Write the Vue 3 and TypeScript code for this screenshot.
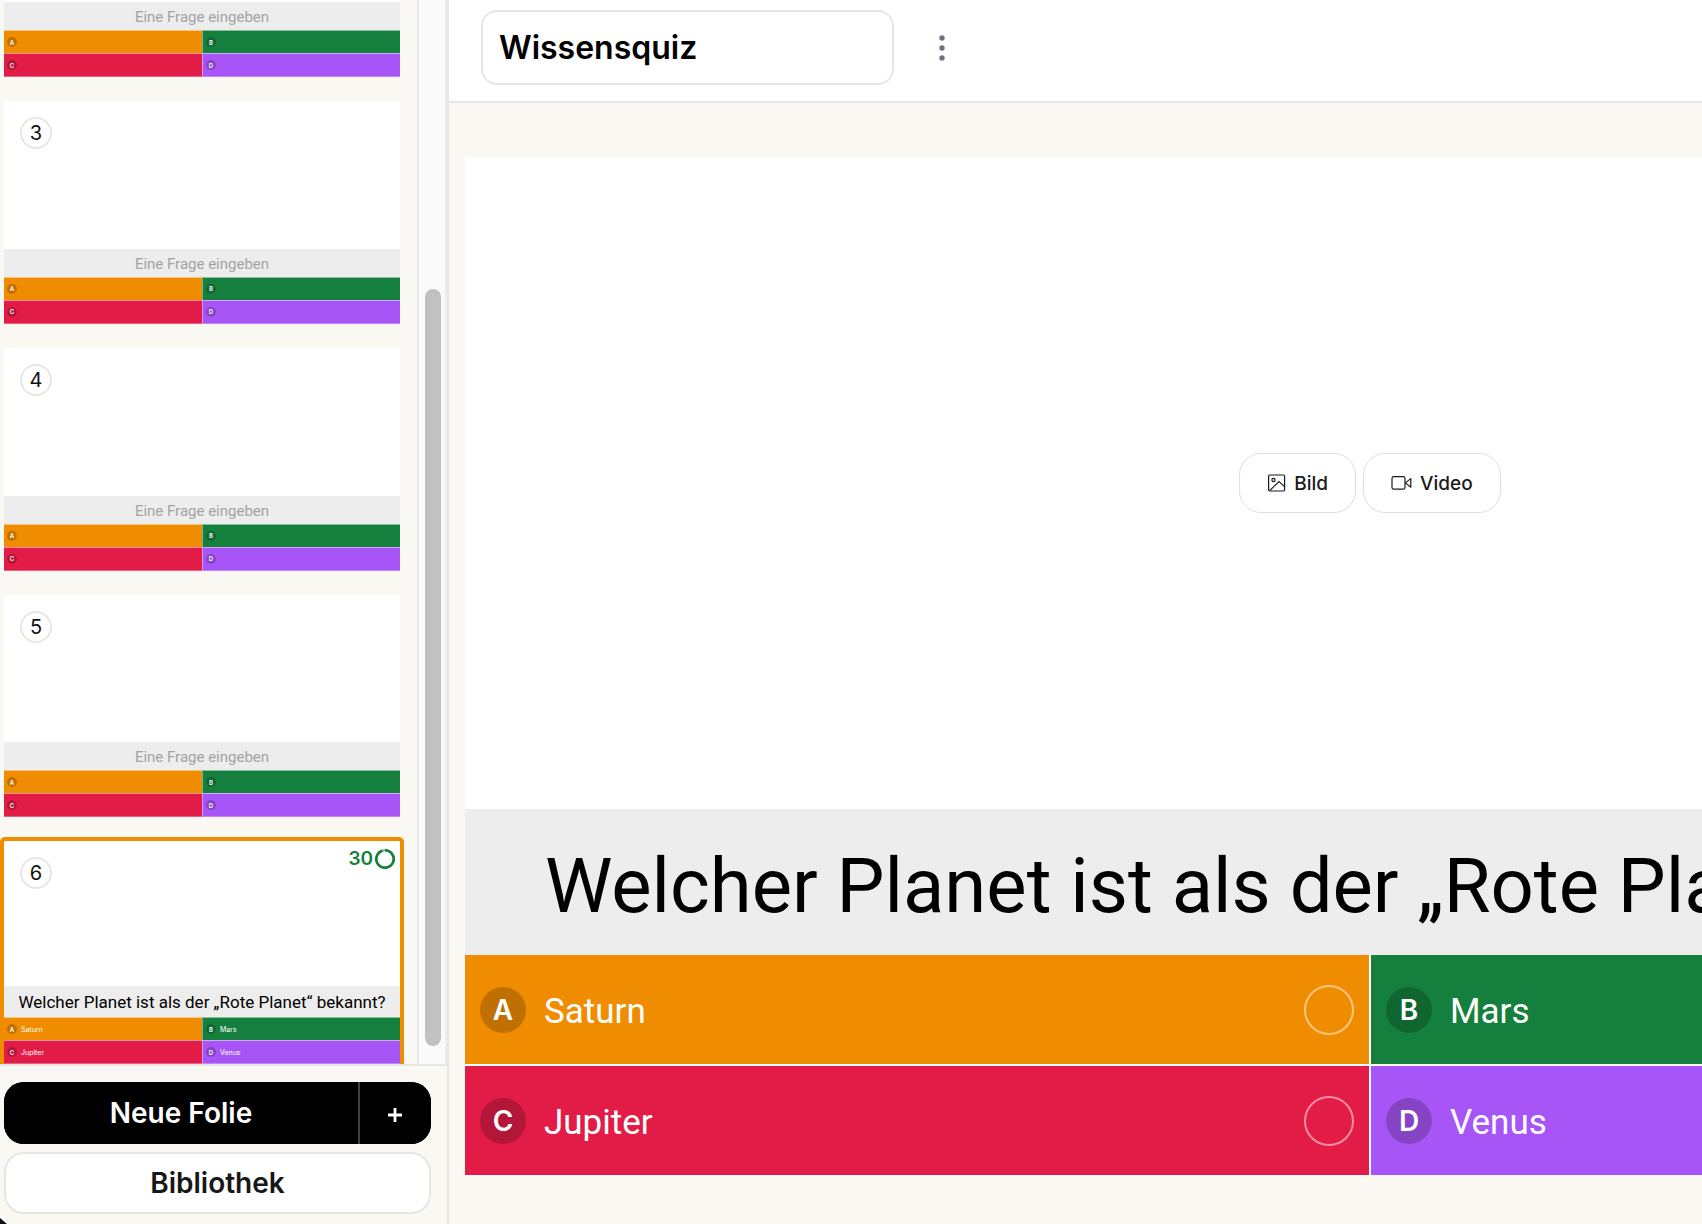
<script setup lang="ts">
import { ref } from 'vue'

interface Answer {
  letter: string
  text: string
  tone: string
}

interface Slide {
  id: number
  label?: string
  question: string
  seconds?: number
  answers: Answer[]
}

const letters = ['A', 'B', 'C', 'D']
const tones = ['orange', 'green', 'red', 'purple']

function makeAnswers(texts: string[] = []): Answer[] {
  return letters.map((letter, i) => ({ letter, text: texts[i] ?? '', tone: tones[i] }))
}

const title = ref('Wissensquiz')
const slides = ref<Slide[]>([
  { id: 2, question: '', answers: makeAnswers() },
  { id: 3, label: '3', question: '', answers: makeAnswers() },
  { id: 4, label: '4', question: '', answers: makeAnswers() },
  { id: 5, label: '5', question: '', answers: makeAnswers() },
  {
    id: 6,
    label: '6',
    question: 'Welcher Planet ist als der „Rote Planet“ bekannt?',
    seconds: 30,
    answers: makeAnswers(['Saturn', 'Mars', 'Jupiter', 'Venus']),
  },
])
const current = ref<Slide>(slides.value[4])
</script>

<template>
  <div class="app">
    <aside class="sidebar">
      <div class="browser">
        <ol class="slides">
          <li v-for="slide in slides" :key="slide.id">
            <button
              type="button"
              class="thumb"
              :class="{ selected: slide.id === current.id }"
              @click="current = slide"
            >
              <span class="thumb-media">
                <span v-if="slide.label" class="number">{{ slide.label }}</span>
                <span v-if="slide.seconds" class="timer">
                  {{ slide.seconds }}
                  <svg width="20" height="20" viewBox="0 0 20 20" aria-hidden="true">
                    <circle cx="10" cy="10" r="8.7" fill="none" stroke="#8fc3a3" stroke-width="2.4" />
                    <path d="M10 1.3A8.7 8.7 0 1 1 7.4 1.7" fill="none" stroke="#15803d" stroke-width="2.6" />
                  </svg>
                </span>
              </span>
              <span class="thumb-question" :class="{ empty: !slide.question }">{{
                slide.question || 'Eine Frage eingeben'
              }}</span>
              <span class="thumb-answers">
                <span v-for="a in slide.answers" :key="a.letter" class="thumb-answer" :class="a.tone">
                  <span class="thumb-letter">{{ a.letter }}</span>
                  <span>{{ a.text }}</span>
                </span>
              </span>
            </button>
          </li>
        </ol>
        <div class="track"><div class="handle"></div></div>
      </div>

      <div class="actions">
        <div class="split">
          <button type="button" class="new-slide">Neue Folie</button>
          <button type="button" class="more-slides" aria-label="Folientyp wählen">
            <svg width="14" height="14" viewBox="0 0 14 14" aria-hidden="true">
              <path d="M7 0V14M0 7H14" stroke="#fff" stroke-width="2.8" />
            </svg>
          </button>
        </div>
        <button type="button" class="library">Bibliothek</button>
      </div>
      <span class="corner"></span>
    </aside>

    <main class="editor">
      <header class="topbar">
        <input v-model="title" class="title" type="text" aria-label="Titel" />
        <button type="button" class="menu" aria-label="Menü">
          <svg width="6" height="26" viewBox="0 0 6 26" fill="#6b7280" aria-hidden="true">
            <circle cx="3" cy="3" r="2.7" />
            <circle cx="3" cy="13" r="2.7" />
            <circle cx="3" cy="23" r="2.7" />
          </svg>
        </button>
      </header>

      <div class="stage">
        <section class="slide">
          <div class="media">
            <button type="button" class="media-button">
              <svg width="19" height="18" viewBox="0 0 19 18" fill="none" stroke="#1a1a1a" stroke-width="1.2" aria-hidden="true">
                <rect x="1.6" y="1" width="16" height="16" rx="1.2" />
                <circle cx="6.5" cy="6" r="1.6" />
                <path d="M2.6 16.6L12 7.6L17.6 12.6" />
              </svg>
              Bild
            </button>
            <button type="button" class="media-button">
              <svg width="21" height="18" viewBox="0 0 21 18" fill="none" stroke="#1a1a1a" stroke-width="1.2" stroke-linejoin="round" aria-hidden="true">
                <rect x="1" y="2.6" width="13" height="12.6" rx="1.8" />
                <path d="M14.4 8.9L19.8 4.6V13.2Z" />
              </svg>
              Video
            </button>
          </div>
          <input v-model="current.question" class="question" type="text" aria-label="Frage" placeholder="Eine Frage eingeben" />
          <div class="answers">
            <div v-for="a in current.answers" :key="a.letter" class="answer" :class="a.tone">
              <span class="letter">{{ a.letter }}</span>
              <input v-model="a.text" class="answer-text" type="text" :aria-label="`Antwort ${a.letter}`" />
              <input class="correct" type="checkbox" :aria-label="`Antwort ${a.letter} ist richtig`" />
            </div>
          </div>
        </section>
      </div>
    </main>
  </div>
</template>

<style>
body {
  margin: 0;
  overflow: hidden;
}
</style>

<style scoped>
.app,
.app * {
  box-sizing: border-box;
}

.app {
  display: flex;
  height: 100vh;
  overflow: hidden;
  background: #f9f8f3;
  font-family: Inter, sans-serif;
  color: #000;
}

button,
input {
  margin: 0;
  padding: 0;
  border: 0;
  font: inherit;
  color: inherit;
}

button {
  cursor: pointer;
}

.orange { background: #f08c00; }
.green { background: #15803d; }
.red { background: #e21c47; }
.purple { background: #a855f7; }

/* Sidebar */
.sidebar {
  position: relative;
  display: flex;
  flex: none;
  flex-direction: column;
  width: 449px;
  border-right: 2px solid #e7e7e2;
}

.browser {
  display: flex;
  flex: 1;
  min-height: 0;
  overflow: hidden;
}

.slides {
  display: flex;
  flex: 1;
  flex-direction: column;
  justify-content: flex-end;
  gap: 24px;
  margin: 0;
  padding: 0 17px 0 4px;
  list-style: none;
}

.slides li {
  display: flex;
  flex: none;
}

.thumb {
  display: flex;
  flex-direction: column;
  width: 100%;
  aspect-ratio: 16 / 9;
  background: #fff;
}

.thumb.selected {
  border-radius: 1px;
  outline: 4px solid #f08c00;
}

.thumb-media {
  display: flex;
  flex: 1;
  align-items: flex-start;
  justify-content: space-between;
  width: 100%;
  padding: 16px 5px 0 16px;
}

.number {
  display: flex;
  align-items: center;
  justify-content: center;
  width: 32px;
  height: 32px;
  border: 2px solid #e7e7e2;
  border-radius: 50%;
  font-size: 20px;
  color: #111;
}

.timer {
  display: flex;
  align-items: center;
  gap: 2px;
  margin-top: -10px;
  font-size: 19px;
  font-weight: 600;
  line-height: 24px;
  color: #15803d;
}

.thumb-question {
  width: 100%;
  padding: 4px 0 3px;
  background: #ededed;
  font-family: Roboto, Inter, sans-serif;
  font-size: 17px;
  line-height: 24px;
  text-align: center;
  white-space: nowrap;
}

.thumb-question.empty {
  padding: 5px 0 3px;
  font-size: 15px;
  line-height: 20px;
  color: #a3a3a3;
}

.thumb-answers {
  display: grid;
  grid-template-columns: 1fr 1fr;
  width: 100%;
}

.thumb-answer {
  display: flex;
  align-items: center;
  gap: 4px;
  height: 23px;
  padding-left: 3px;
  border-top: 1px solid rgba(255, 255, 255, 0.5);
  font-size: 7px;
  color: #fff;
}

.thumb-answer:nth-child(even) {
  border-left: 1px solid rgba(255, 255, 255, 0.4);
}

.thumb-answer:nth-child(n + 3) {
  height: 24px;
  border-bottom: 1px solid rgba(255, 255, 255, 0.3);
}

.thumb-letter {
  display: flex;
  align-items: center;
  justify-content: center;
  width: 10px;
  height: 10px;
  border-radius: 50%;
  background: rgba(0, 0, 0, 0.2);
  font-size: 6px;
  font-weight: 600;
}

.track {
  flex: none;
  width: 30px;
  padding: 289px 4px 18px 6px;
  border-right: 2px solid #ededed;
  border-left: 2px solid #e8e8e8;
  background: #fafafa;
}

.handle {
  height: 100%;
  border-radius: 8px;
  background: #c1c1c1;
}

.actions {
  display: flex;
  flex: none;
  flex-direction: column;
  gap: 8px;
  padding: 16px 16px 10px 4px;
  border-top: 2px solid #e7e7e2;
}

.split {
  display: flex;
  height: 62px;
  overflow: hidden;
  border-radius: 20px;
  background: #000;
}

.new-slide {
  flex: 1;
  background: #000;
  font-size: 28px;
  font-weight: 600;
  color: #fff;
}

.more-slides {
  display: flex;
  align-items: center;
  justify-content: center;
  width: 73px;
  padding: 4px 2px 0 0;
  border-left: 2px solid #404040;
  background: #000;
}

.library {
  height: 62px;
  border: 2px solid #e7e7e2;
  border-radius: 20px;
  background: #fff;
  font-size: 28px;
  font-weight: 600;
  color: #171717;
}

.corner {
  position: absolute;
  bottom: 0;
  left: 0;
  width: 7px;
  height: 6px;
  background: #111;
  clip-path: polygon(0 0, 100% 100%, 0 100%);
}

/* Editor */
.editor {
  display: flex;
  flex: 1;
  flex-direction: column;
  min-width: 0;
}

.topbar {
  display: flex;
  flex: none;
  align-items: center;
  gap: 32px;
  padding: 10px 32px 16px;
  border-bottom: 2px solid #e7e7e2;
  background: #fff;
}

.title {
  width: 413px;
  height: 75px;
  padding: 0 16px;
  border: 2px solid #e7e7e2;
  border-radius: 16px;
  background: #fff;
  font-size: 32px;
  font-weight: 600;
}

.menu {
  display: flex;
  align-items: center;
  justify-content: center;
  width: 32px;
  height: 48px;
  background: none;
}

.stage {
  flex: 1;
  min-height: 0;
  overflow: hidden;
  padding: 54px 0 0 16px;
}

.slide {
  display: flex;
  flex-direction: column;
  min-width: 1810px;
  aspect-ratio: 16 / 9;
  background: #fff;
}

.media {
  display: flex;
  flex: 1;
  align-items: center;
  justify-content: center;
  gap: 7px;
}

.media-button {
  display: flex;
  align-items: center;
  gap: 8px;
  height: 60px;
  padding: 0 27px;
  border: 1px solid #dfdfdf;
  border-radius: 22px;
  background: #fff;
  font-size: 19px;
  font-weight: 500;
  color: #1a1a1a;
}

.question {
  width: 100%;
  height: 146px;
  padding: 8px 80px 0;
  background: #ededed;
  font-family: Roboto, Inter, sans-serif;
  font-size: 76px;
}

.answers {
  display: grid;
  grid-template-columns: 1fr 1fr;
  gap: 2px;
}

.answer {
  display: flex;
  align-items: center;
  height: 109px;
  padding: 0 15px;
  color: #fff;
}

.letter {
  display: flex;
  flex: none;
  align-items: center;
  justify-content: center;
  width: 46px;
  height: 46px;
  border-radius: 50%;
  background: rgba(0, 0, 0, 0.2);
  font-size: 28px;
  font-weight: 600;
}

.answer-text {
  flex: 1;
  min-width: 0;
  padding: 4px 16px 0 18px;
  background: none;
  font-family: Roboto, Inter, sans-serif;
  font-size: 35px;
}

.correct {
  flex: none;
  width: 50px;
  height: 50px;
  border: 2px solid rgba(255, 255, 255, 0.5);
  border-radius: 50%;
  appearance: none;
}
</style>
